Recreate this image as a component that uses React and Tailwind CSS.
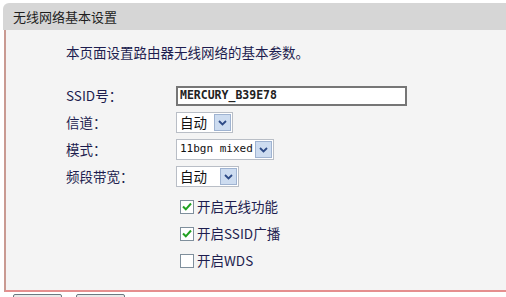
import React from 'react';

const cjk = { fontFamily: '"Noto Sans CJK SC", "Noto Sans", sans-serif' };
const mono = { fontFamily: '"DejaVu Sans Mono", "Liberation Mono", monospace' };

const Arrow = () => (
  <span className="flex h-[17px] w-[17px] shrink-0 items-center justify-center border border-[#9fb3d1] bg-[#cddcf0]">
    <svg width="9" height="6" viewBox="0 0 9 6">
      <path d="M1 1l3.5 3.5L8 1" fill="none" stroke="#2d4a86" strokeWidth="1.8" />
    </svg>
  </span>
);

const Select = ({ value, width, isMono }) => (
  <div
    className={`flex h-[21px] items-center justify-between border border-[#b9bec6] bg-white pl-[3px] pr-[1px] ${width}`}
  >
    <span
      className="whitespace-nowrap text-[13.5px] text-[#111]"
      style={isMono ? { ...mono, fontSize: '11px' } : cjk}
    >
      {value}
    </span>
    <Arrow />
  </div>
);

const Check = ({ checked, label }) => (
  <div className="flex h-[27px] items-center pl-[114px]">
    <span className="flex h-[14px] w-[14px] items-center justify-center border border-[#7f8f9c] bg-white">
      {checked && (
        <svg width="10" height="9" viewBox="0 0 10 9">
          <path d="M1 4.5l2.8 2.8L9 1.5" fill="none" stroke="#21a121" strokeWidth="2" />
        </svg>
      )}
    </span>
    <span className="ml-[3px] text-[13.5px] text-[#1d1d4f]">{label}</span>
  </div>
);

const Row = ({ label, children }) => (
  <div className="flex h-[27px] items-center">
    <span className="w-[110px] text-[13.5px] text-[#1d1d4f]">{label}</span>
    {children}
  </div>
);

export default function App() {
  return (
    <div className="h-[297px] w-[506px] overflow-hidden bg-white pl-[3px] pt-[3px]" style={cjk}>
      {/* title bar */}
      <div className="flex h-[27px] items-center rounded-tl-[6px] bg-[#d6d6d6] pl-[10px] text-[13px] text-[#1e1e1e]">
        无线网络基本设置
      </div>

      {/* body */}
      <div className="ml-[1px] h-[262px] border-b-2 border-l-2 border-b-[#e58f8f] border-l-[#c99a92] bg-[#f4f4f4] pl-[60px] pt-[12px]">
        <div className="flex h-[20px] items-center text-[13.5px] text-[#1d1d4f]">本页面设置路由器无线网络的基本参数。</div>

        <div className="mt-[20px]">
          <Row label="SSID号：">
            <div className="flex h-[20px] w-[231px] items-center border-2 border-[#767676] bg-white pl-[2px]">
              <span className="text-[11.5px] font-bold text-[#222]" style={mono}>MERCURY_B39E78</span>
            </div>
          </Row>
          <Row label="信道：">
            <Select value="自动" width="w-[57px]" />
          </Row>
          <Row label="模式：">
            <Select value="11bgn mixed" width="w-[98px]" isMono />
          </Row>
          <Row label="频段带宽：">
            <Select value="自动" width="w-[63px]" />
          </Row>
        </div>

        <div className="mt-[3px]">
          <Check checked label="开启无线功能" />
          <Check checked label="开启SSID广播" />
          <Check label="开启WDS" />
        </div>
      </div>

      {/* buttons (cut off) */}
      <div className="flex gap-[14px] pl-[10px] pt-[2px]">
        <div className="h-[10px] w-[49px] rounded-[2px] border border-[#6b7880] bg-[#e9e9e9]" />
        <div className="h-[10px] w-[49px] rounded-[2px] border border-[#6b7880] bg-[#e9e9e9]" />
      </div>
    </div>
  );
}
